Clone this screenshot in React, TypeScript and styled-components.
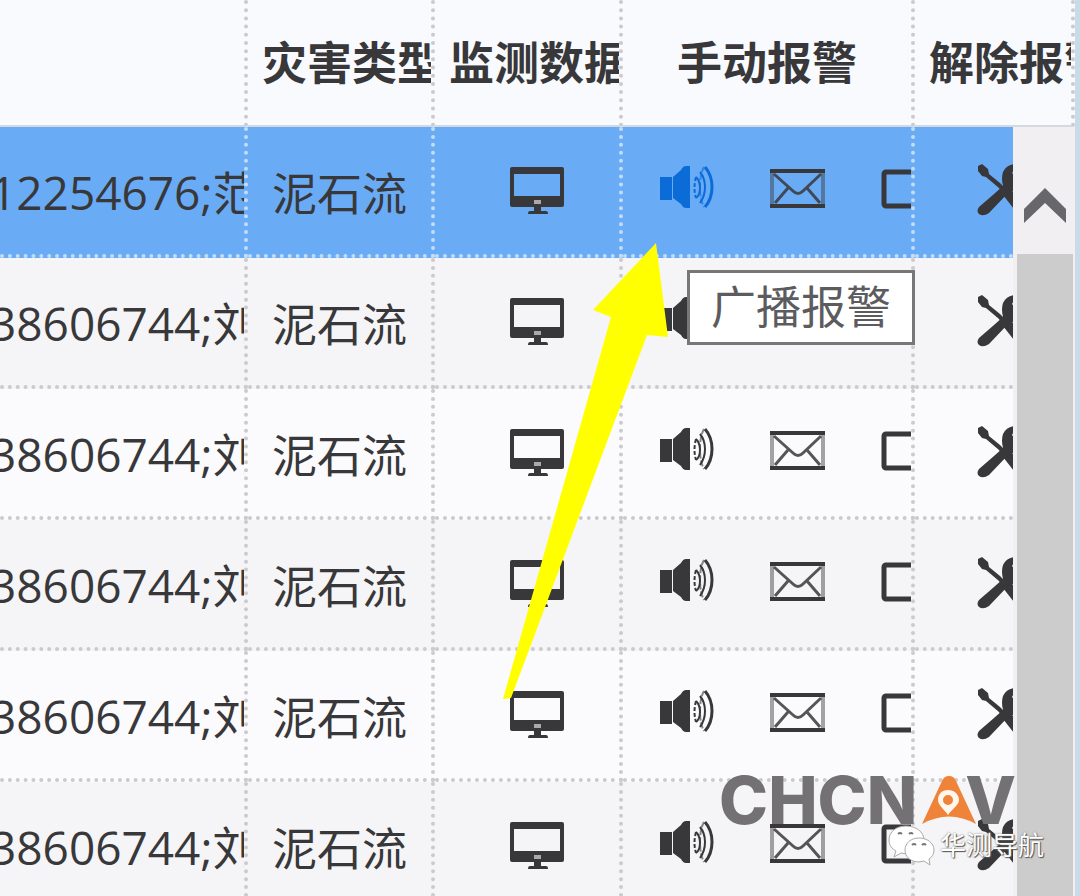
import React from 'react';
import styled, { createGlobalStyle } from 'styled-components';

const GlobalStyle = createGlobalStyle`
  * { box-sizing: border-box; }
  html, body { margin: 0; background: #f5f4f6; }
  body { font-family: "Open Sans", "Noto Sans CJK SC", sans-serif; color: #38383a; }
`;

const dots = '#cbcacd';
const dotsSelected = '#c3dcfb';

const Frame = styled.main`
  position: relative;
  display: flex;
  flex-direction: column;
  width: 100%;
  height: 100vh;
  overflow: hidden;
  border-right: 5px solid #c9dae9;
  background: #f5f4f6;
`;

const Grid = styled.table`
  width: 100%;
  table-layout: fixed;
  border-collapse: separate;
  border-spacing: 0;
`;

const Col = styled.col<{ $width?: number }>`
  width: ${(p) => (p.$width ? `${p.$width}px` : 'auto')};
`;

const HeadRow = styled.tr`
  height: 127px;
  background: #f8fafe;
`;

const HeadCell = styled.th<{ $center?: boolean }>`
  padding: 0 0 0 ${(p) => (p.$center ? 0 : 14)}px;
  overflow: hidden;
  border-right: 4px dotted ${dots};
  border-bottom: 2px solid #d3d9e3;
  font-size: 45px;
  font-weight: 700;
  line-height: 60px;
  text-align: ${(p) => (p.$center ? 'center' : 'left')};
  white-space: nowrap;
`;

const Body = styled.div`
  display: flex;
  flex: 1;
  min-height: 0;
`;

const Rows = styled.div`
  flex: 1;
  min-width: 0;
  overflow: hidden;
`;

const Row = styled.tr<{ $selected: boolean }>`
  height: 131px;
  background: ${(p) => (p.$selected ? '#6aabf6' : '#fbfafc')};
  --dots: ${(p) => (p.$selected ? dotsSelected : dots)};
  &:nth-child(even) { background: #f5f4f6; }
`;

const Cell = styled.td`
  height: 131px;
  padding: 0;
  overflow: hidden;
  border-right: 4px dotted var(--dots);
  border-bottom: 4px dotted var(--dots);
  white-space: nowrap;
  &:last-child { border-right: 0; }
`;

const TextCell = styled(Cell)`
  padding: 6px 0 0 24px;
  font-size: 45px;
  line-height: 60px;
`;

const ContactCell = styled(TextCell)`
  padding: 2px 0 0;
  font-size: 46px;
`;

/* The contact list is scrolled a little to the left of its column. */
const Contact = styled.div`
  margin-left: -10px;
`;

const Actions = styled.div<{ $start: number }>`
  display: flex;
  gap: 54px;
  padding-left: ${(p) => p.$start}px;
`;

const IconButton = styled.button<{ $active?: boolean }>`
  flex: none;
  width: 56px;
  height: 56px;
  padding: 0;
  border: 0;
  background: none;
  color: ${(p) => (p.$active ? '#0b6cd8' : '#38383a')};
  cursor: pointer;
  svg { display: block; }
`;

const Scrollbar = styled.div`
  display: flex;
  flex-direction: column;
  flex: none;
  width: 62px;
  padding: 0 2px 0 4px;
  background: #f1eff2;
`;

const ScrollUp = styled.button`
  flex: none;
  height: 127px;
  padding: 34px 0 0;
  border: 0;
  background: none;
  color: #67666a;
`;

const Thumb = styled.div`
  flex: 1;
  background: #cdcccd;
`;

const Tooltip = styled.div`
  position: absolute;
  top: 270px;
  right: 160px;
  width: 228px;
  height: 75px;
  border: 3px solid #777;
  background: #fff;
  color: #5c5c60;
  font-size: 45px;
  line-height: 68px;
  text-align: center;
  white-space: nowrap;
`;

const Pointer = styled.svg`
  position: absolute;
  top: 243px;
  right: 407px;
  pointer-events: none;
`;

const Watermark = styled.div`
  position: absolute;
  right: 31px;
  bottom: 30px;
  display: flex;
  flex-direction: column;
  align-items: flex-end;
  pointer-events: none;
`;

const Brand = styled.div`
  display: flex;
  align-items: center;
  height: 48px;
  margin-right: 28px;
  color: #737174;
  font-family: Inter, "Liberation Sans", sans-serif;
  font-size: 66px;
  font-weight: 800;
  line-height: 48px;

  svg { margin: 0 -12px 0 4px; }
`;

const Account = styled.div`
  display: flex;
  align-items: center;
  gap: 4px;
  height: 42px;
  color: #fff;
  font-size: 26px;
  line-height: 40px;
  text-shadow: 1px 1px 1px #555, 0 0 2px #777;
`;

const Monitor = () => (
  <svg width="56" height="56" viewBox="0 0 56 56" fill="currentColor" aria-hidden="true">
    <path fillRule="evenodd" d="M2 4h50q2 0 2 2v36q0 2-2 2H2q-2 0-2-2V6q0-2 2-2zM4 11v22h46V11z" />
    <path d="M24 44h7v4h5q2 0 2 3H18q0-3 2-3h4z" />
    <path d="M24 37h7v4h-7z" fill="#aaa" />
  </svg>
);

const Speaker = () => (
  <svg width="56" height="56" viewBox="0 0 56 56" fill="currentColor" aria-hidden="true">
    <path d="M0 14h12v23H0zM13 14l8-7q2-4 5-4h4v42h-4q-3 0-5-4l-8-6z" />
    <g fill="none" stroke="currentColor" strokeWidth="2">
      <path d="M36 14q4 4 4 11t-4 10" />
      <path d="M36 14q-3 11 0 21" strokeDasharray="4 2" />
      <path d="M40 9q5 6 5 15t-5 16" />
      <path d="M44 4q-4 7-4 20t4 20" strokeDasharray="6 2" opacity=".6" />
      <path d="M45 4q7 8 7 20t-7 20" strokeWidth="3" />
    </g>
  </svg>
);

const Mail = () => (
  <svg width="56" height="56" viewBox="0 0 56 56" fill="none" stroke="currentColor" aria-hidden="true">
    <path d="M2 7v37M53 7v37" strokeWidth="4" opacity=".45" />
    <path d="M0 8h55M0 43h55" strokeWidth="4" />
    <path d="M4 11l19 17q5 5 10 0L51 11M5 40l13-15M50 40L37 25" strokeWidth="3" opacity=".85" />
  </svg>
);

const Phone = () => (
  <svg width="56" height="56" viewBox="0 0 56 56" fill="none" stroke="currentColor" aria-hidden="true">
    <rect x="4" y="9" width="60" height="34" rx="2" strokeWidth="5" />
  </svg>
);

const Tools = () => (
  <svg width="56" height="56" viewBox="0 0 56 56" fill="currentColor" aria-hidden="true">
    <path d="M1 3l4-2 6 5 1 5 11 9 6 6 6 2 16 16q3 6-1 9-4 2-9-2L26 32l-4-7L9 14l-4-1-4-5z" />
    <path d="M2 44l15-13 9-8q-2-8 0-14 4-8 14-8l-5 9 5 6 9-4q0 9-7 13-5 3-10 4L12 50q-6 4-10 1-3-3 0-7z" />
  </svg>
);

const WeChat = () => (
  <svg width="48" height="42" viewBox="0 0 48 42" fill="#fff" stroke="#aaa" aria-hidden="true">
    <path d="M18 2C8 2 1 8 1 16c0 5 3 9 7 11l-2 6 7-4 6 1c9 0 17-6 17-14S28 2 18 2z" />
    <path d="M31 14c-8 0-14 5-14 12s6 12 14 12l5-1 6 4-1-6c3-2 5-5 5-9 0-7-7-12-15-12z" />
    <path d="M10 10q2-2 4 0M21 10q2-2 4 0M24 21q2-2 4 0M34 21q2-2 4 0" fill="none" stroke="#777" strokeWidth="2" />
  </svg>
);

const BrandMark = () => (
  <svg width="56" height="48" viewBox="0 0 56 48" aria-hidden="true">
    <path d="M21 5q2-5 7-5t7 5l20 43Q28 33 1 48z" fill="#ee8339" />
    <path fillRule="evenodd" fill="#fff6ee" d="M27 14c-6 0-10 4-10 10 0 5 5 8 10 15 5-7 11-10 11-15 0-6-5-10-11-10zm0 5a5 5 0 1 1 0 10 5 5 0 0 1 0-10z" />
  </svg>
);

const rows = ['12254676;范', '38606744;刘', '38606744;刘', '38606744;刘', '38606744;刘', '38606744;刘'];

const Columns = ({ last }: { last: number }) => (
  <colgroup>
    <Col />
    <Col $width={187} />
    <Col $width={188} />
    <Col $width={292} />
    <Col $width={last} />
  </colgroup>
);

export default function App() {
  return (
    <>
      <GlobalStyle />
      <Frame>
        <Grid>
          <Columns last={160} />
          <thead>
            <HeadRow>
              <HeadCell />
              <HeadCell scope="col">灾害类型</HeadCell>
              <HeadCell scope="col">监测数据</HeadCell>
              <HeadCell scope="col" $center>手动报警</HeadCell>
              <HeadCell scope="col">解除报警</HeadCell>
            </HeadRow>
          </thead>
        </Grid>
        <Body>
          <Rows>
            <Grid>
              <Columns last={98} />
              <tbody>
                {rows.map((contact, i) => (
                  <Row key={i} $selected={i === 0}>
                    <ContactCell><Contact>{contact}</Contact></ContactCell>
                    <TextCell>泥石流</TextCell>
                    <Cell>
                      <Actions $start={75}>
                        <IconButton type="button" aria-label="监测数据"><Monitor /></IconButton>
                      </Actions>
                    </Cell>
                    <Cell>
                      <Actions $start={37}>
                        <IconButton type="button" aria-label="广播报警" $active={i === 0}><Speaker /></IconButton>
                        <IconButton type="button" aria-label="短信报警"><Mail /></IconButton>
                        <IconButton type="button" aria-label="电话报警"><Phone /></IconButton>
                      </Actions>
                    </Cell>
                    <Cell>
                      <Actions $start={62}>
                        <IconButton type="button" aria-label="解除报警"><Tools /></IconButton>
                      </Actions>
                    </Cell>
                  </Row>
                ))}
              </tbody>
            </Grid>
          </Rows>
          <Scrollbar>
            <ScrollUp type="button" aria-label="向上滚动">
              <svg width="42" height="36" viewBox="0 0 42 36" fill="currentColor" aria-hidden="true">
                <path d="M21 0l21 21v14L21 15 0 35V21z" />
              </svg>
            </ScrollUp>
            <Thumb />
          </Scrollbar>
        </Body>
        <Tooltip role="tooltip">广播报警</Tooltip>
        <Pointer width="166" height="457" viewBox="0 0 166 457" aria-hidden="true">
          <path d="M154 0l12 94-21-2L9 455l-8 1L109 74 91 67z" fill="#ff0" />
        </Pointer>
        <Watermark>
          <Brand>
            <span>CHCN</span>
            <BrandMark />
            <span>V</span>
          </Brand>
          <Account>
            <WeChat />
            <span>华测导航</span>
          </Account>
        </Watermark>
      </Frame>
    </>
  );
}
